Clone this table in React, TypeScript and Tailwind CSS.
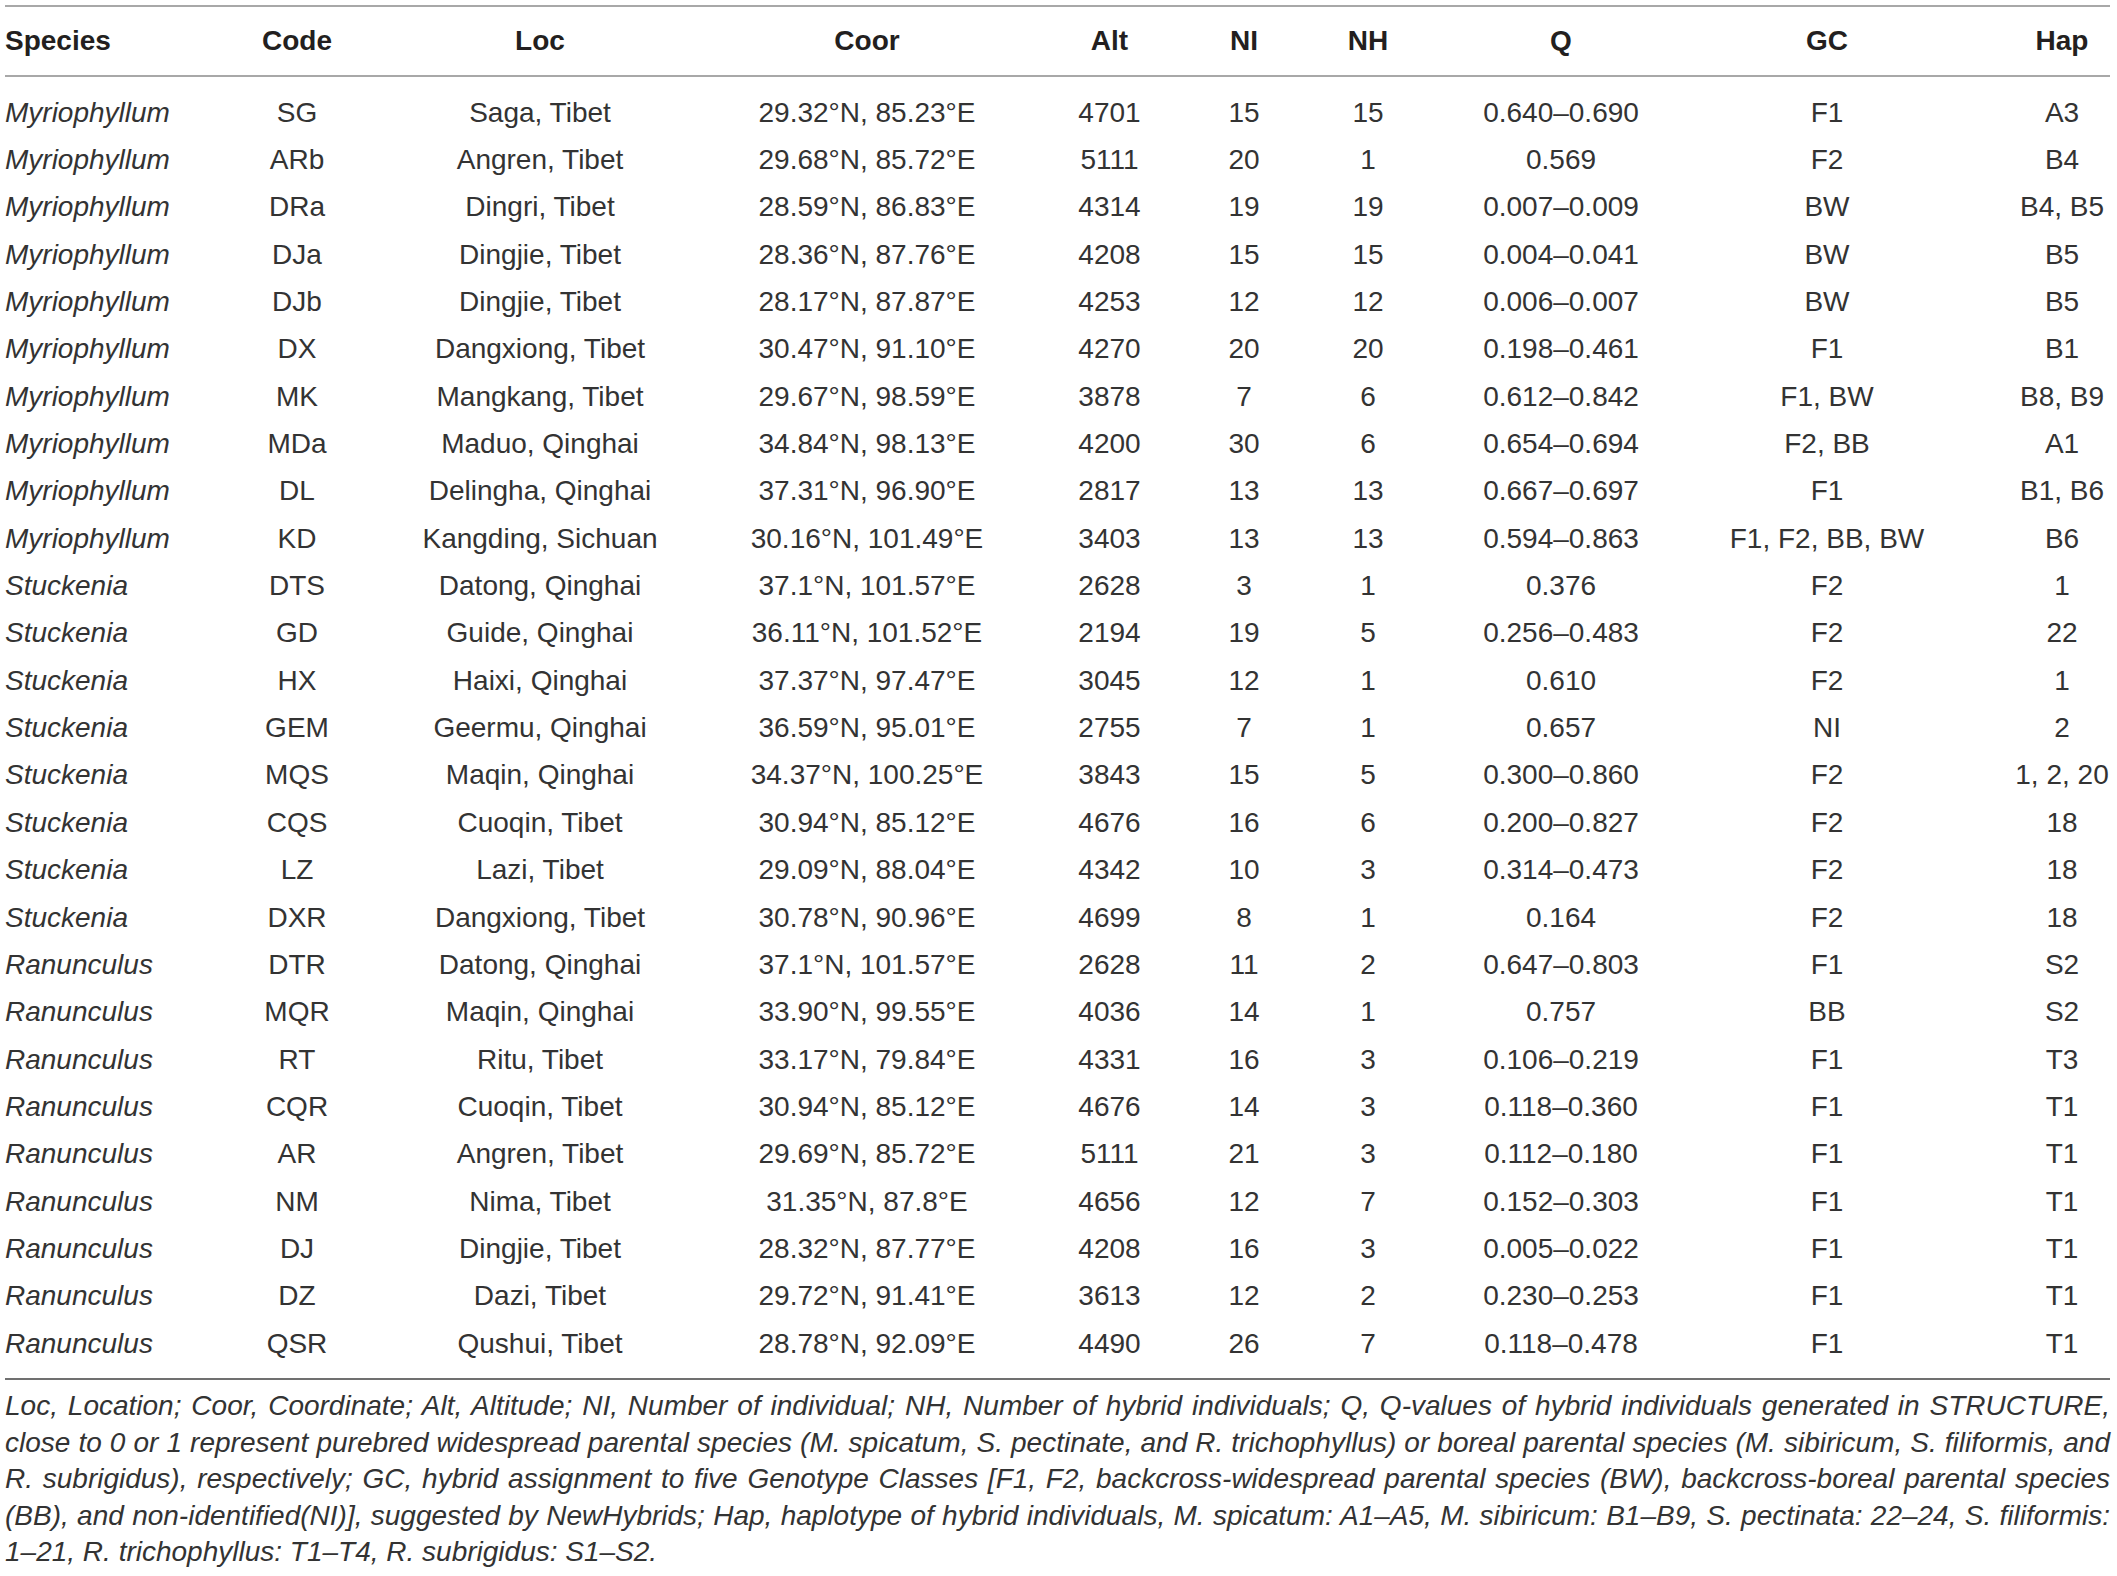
const COLS = [
  "text-left",
  "text-center",
  "text-center",
  "text-center",
  "text-center",
  "text-center",
  "text-center",
  "text-center",
  "text-center",
  "text-center pl-[50px]",
];

const HEAD = ["Species", "Code", "Loc", "Coor", "Alt", "NI", "NH", "Q", "GC", "Hap"];

const ROWS: string[][] = [
  ["Myriophyllum", "SG", "Saga, Tibet", "29.32°N, 85.23°E", "4701", "15", "15", "0.640–0.690", "F1", "A3"],
  ["Myriophyllum", "ARb", "Angren, Tibet", "29.68°N, 85.72°E", "5111", "20", "1", "0.569", "F2", "B4"],
  ["Myriophyllum", "DRa", "Dingri, Tibet", "28.59°N, 86.83°E", "4314", "19", "19", "0.007–0.009", "BW", "B4, B5"],
  ["Myriophyllum", "DJa", "Dingjie, Tibet", "28.36°N, 87.76°E", "4208", "15", "15", "0.004–0.041", "BW", "B5"],
  ["Myriophyllum", "DJb", "Dingjie, Tibet", "28.17°N, 87.87°E", "4253", "12", "12", "0.006–0.007", "BW", "B5"],
  ["Myriophyllum", "DX", "Dangxiong, Tibet", "30.47°N, 91.10°E", "4270", "20", "20", "0.198–0.461", "F1", "B1"],
  ["Myriophyllum", "MK", "Mangkang, Tibet", "29.67°N, 98.59°E", "3878", "7", "6", "0.612–0.842", "F1, BW", "B8, B9"],
  ["Myriophyllum", "MDa", "Maduo, Qinghai", "34.84°N, 98.13°E", "4200", "30", "6", "0.654–0.694", "F2, BB", "A1"],
  ["Myriophyllum", "DL", "Delingha, Qinghai", "37.31°N, 96.90°E", "2817", "13", "13", "0.667–0.697", "F1", "B1, B6"],
  ["Myriophyllum", "KD", "Kangding, Sichuan", "30.16°N, 101.49°E", "3403", "13", "13", "0.594–0.863", "F1, F2, BB, BW", "B6"],
  ["Stuckenia", "DTS", "Datong, Qinghai", "37.1°N, 101.57°E", "2628", "3", "1", "0.376", "F2", "1"],
  ["Stuckenia", "GD", "Guide, Qinghai", "36.11°N, 101.52°E", "2194", "19", "5", "0.256–0.483", "F2", "22"],
  ["Stuckenia", "HX", "Haixi, Qinghai", "37.37°N, 97.47°E", "3045", "12", "1", "0.610", "F2", "1"],
  ["Stuckenia", "GEM", "Geermu, Qinghai", "36.59°N, 95.01°E", "2755", "7", "1", "0.657", "NI", "2"],
  ["Stuckenia", "MQS", "Maqin, Qinghai", "34.37°N, 100.25°E", "3843", "15", "5", "0.300–0.860", "F2", "1, 2, 20"],
  ["Stuckenia", "CQS", "Cuoqin, Tibet", "30.94°N, 85.12°E", "4676", "16", "6", "0.200–0.827", "F2", "18"],
  ["Stuckenia", "LZ", "Lazi, Tibet", "29.09°N, 88.04°E", "4342", "10", "3", "0.314–0.473", "F2", "18"],
  ["Stuckenia", "DXR", "Dangxiong, Tibet", "30.78°N, 90.96°E", "4699", "8", "1", "0.164", "F2", "18"],
  ["Ranunculus", "DTR", "Datong, Qinghai", "37.1°N, 101.57°E", "2628", "11", "2", "0.647–0.803", "F1", "S2"],
  ["Ranunculus", "MQR", "Maqin, Qinghai", "33.90°N, 99.55°E", "4036", "14", "1", "0.757", "BB", "S2"],
  ["Ranunculus", "RT", "Ritu, Tibet", "33.17°N, 79.84°E", "4331", "16", "3", "0.106–0.219", "F1", "T3"],
  ["Ranunculus", "CQR", "Cuoqin, Tibet", "30.94°N, 85.12°E", "4676", "14", "3", "0.118–0.360", "F1", "T1"],
  ["Ranunculus", "AR", "Angren, Tibet", "29.69°N, 85.72°E", "5111", "21", "3", "0.112–0.180", "F1", "T1"],
  ["Ranunculus", "NM", "Nima, Tibet", "31.35°N, 87.8°E", "4656", "12", "7", "0.152–0.303", "F1", "T1"],
  ["Ranunculus", "DJ", "Dingjie, Tibet", "28.32°N, 87.77°E", "4208", "16", "3", "0.005–0.022", "F1", "T1"],
  ["Ranunculus", "DZ", "Dazi, Tibet", "29.72°N, 91.41°E", "3613", "12", "2", "0.230–0.253", "F1", "T1"],
  ["Ranunculus", "QSR", "Qushui, Tibet", "28.78°N, 92.09°E", "4490", "26", "7", "0.118–0.478", "F1", "T1"],
];

const NOTES = [
  "Loc, Location; Coor, Coordinate; Alt, Altitude; NI, Number of individual; NH, Number of hybrid individuals; Q, Q-values of hybrid individuals generated in STRUCTURE,",
  "close to 0 or 1 represent purebred widespread parental species (M. spicatum, S. pectinate, and R. trichophyllus) or boreal parental species (M. sibiricum, S. filiformis, and",
  "R. subrigidus), respectively; GC, hybrid assignment to five Genotype Classes [F1, F2, backcross-widespread parental species (BW), backcross-boreal parental species",
  "(BB), and non-identified(NI)], suggested by NewHybrids; Hap, haplotype of hybrid individuals, M. spicatum: A1–A5, M. sibiricum: B1–B9, S. pectinata: 22–24, S. filiformis:",
];

const GRID =
  "grid grid-cols-[208px_168px_318px_336px_149px_120px_128px_258px_274px_146px]";

export default function App() {
  return (
    <div className="min-h-[1576px] w-[2117px] overflow-hidden bg-white pt-[5px] pl-[5px] font-['Liberation_Sans',Arial,sans-serif] text-[#231f20]">
      <div className="w-[2105px]">
        <div className="h-[2px] bg-[#a8a8a8]" />
        <div className={`${GRID} h-[68px] items-center text-[28px] font-bold`}>
          {HEAD.map((h, i) => (
            <div key={h} className={`${COLS[i]} whitespace-nowrap`}>
              {h}
            </div>
          ))}
        </div>
        <div className="h-[2px] bg-[#a8a8a8]" />
        <div className="pt-[12px] pb-[11px]">
          {ROWS.map((r) => (
            <div key={r[1]} className={`${GRID} h-[47.35px] items-center text-[28px] text-[#333]`}>
              {r.map((c, i) => (
                <div key={i} className={`${COLS[i]} whitespace-nowrap ${i === 0 ? "italic" : ""}`}>
                  {c}
                </div>
              ))}
            </div>
          ))}
        </div>
        <div className="h-[2px] bg-[#707070]" />
        <div className="pt-[8px] text-[28px] leading-[36.5px] italic text-[#333]">
          {NOTES.map((n) => (
            <div key={n} className="whitespace-nowrap text-justify [text-align-last:justify]">
              {n}
            </div>
          ))}
          <div className="whitespace-nowrap">1–21, R. trichophyllus: T1–T4, R. subrigidus: S1–S2.</div>
        </div>
      </div>
    </div>
  );
}
